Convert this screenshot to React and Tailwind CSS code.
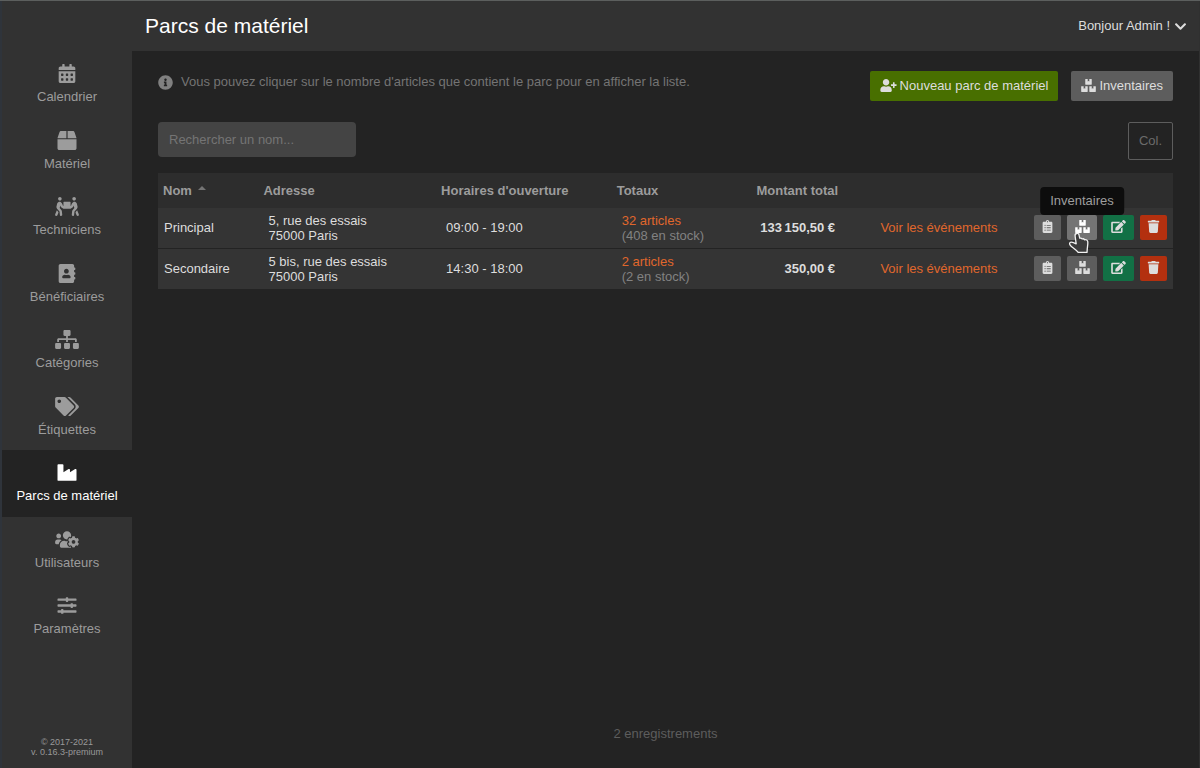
import { FaCalendarAlt, FaBox, FaPeopleCarry, FaAddressBook, FaSitemap, FaTags, FaIndustry, FaUsersCog, FaSlidersH, FaInfoCircle, FaUserPlus, FaBoxes, FaClipboardList, FaEdit, FaTrash, FaChevronDown } from "react-icons/fa";

const NAV = [
  { label: "Calendrier", Icon: FaCalendarAlt },
  { label: "Matériel", Icon: FaBox },
  { label: "Techniciens", Icon: FaPeopleCarry },
  { label: "Bénéficiaires", Icon: FaAddressBook },
  { label: "Catégories", Icon: FaSitemap },
  { label: "Étiquettes", Icon: FaTags },
  { label: "Parcs de matériel", Icon: FaIndustry, active: true },
  { label: "Utilisateurs", Icon: FaUsersCog },
  { label: "Paramètres", Icon: FaSlidersH },
];

const PARKS = [
  { name: "Principal", street: "5, rue des essais", town: "75000 Paris", hours: "09:00 - 19:00", articles: "32 articles", stock: "(408 en stock)", amount: "133\u202f150,50 €", hovered: true },
  { name: "Secondaire", street: "5 bis, rue des essais", town: "75000 Paris", hours: "14:30 - 18:00", articles: "2 articles", stock: "(2 en stock)", amount: "350,00 €" },
];

function Sidebar() {
  return (
    <aside className="flex w-[132px] shrink-0 flex-col justify-between border-l-2 border-[#2f343b] bg-[#323232] pt-[50px]">
      <nav>
        <ul className="grid h-[599px] auto-rows-fr">
          {NAV.map(({ label, Icon, active }) => (
            <li key={label}>
              <a
                href="#"
                aria-current={active ? "page" : undefined}
                className={
                  active
                    ? "flex h-full flex-col items-center gap-1 bg-[#232323] pt-[13px] text-white"
                    : "flex h-full flex-col items-center gap-1 pt-[13px] text-[#9c9c9c]"
                }
              >
                <Icon className="h-[19px] w-6" aria-hidden="true" />
                <span className="leading-5">{label}</span>
              </a>
            </li>
          ))}
        </ul>
      </nav>
      <p className="pb-[11px] text-center text-[9px] leading-[10px] text-[#999999]">
        © 2017-2021
        <br />
        v. 0.16.3-premium
      </p>
    </aside>
  );
}

function HandCursor() {
  return (
    <svg viewBox="0 0 22 24" className="pointer-events-none absolute top-[17px] left-0 z-20 h-6 w-[22px]" aria-hidden="true">
      <path
        d="M9.8 1.5C11 1.3 11.9 2 12.1 3.2L12.7 6.2C13.6 5.9 14.6 6.2 15.1 7C16 6.6 17 6.9 17.5 7.8C19.2 7.4 20.6 8.2 20.8 9.8C21 12 20.6 14.4 20.3 16.4L20 20.4H11.2C9.8 18 6.6 16.4 4.2 14.2C2.8 12.8 2 11.6 3 10.6C4.2 9.6 6 10.2 9.2 11.8L8.1 4C7.9 2.6 8.5 1.7 9.8 1.5Z"
        fill="#3b3b3b"
        stroke="#f2f2f2"
        strokeWidth="1.3"
        strokeLinejoin="round"
      />
    </svg>
  );
}

function RowActions({ name, hovered }) {
  return (
    <div className="flex items-center justify-end gap-[6px]">
      <button aria-label={`Liste du matériel de ${name}`} className="flex h-[25px] w-[27px] items-center justify-center rounded-xs bg-[#5d5d5d] pb-0.5 text-[#dddddd]">
        <FaClipboardList size={13} />
      </button>
      <div className="relative">
        <button
          aria-label={`Inventaires de ${name}`}
          className={
            hovered
              ? "flex h-[25px] w-[30px] items-center justify-center rounded-xs bg-[#747474] pb-0.5 text-white"
              : "flex h-[25px] w-[30px] items-center justify-center rounded-xs bg-[#5d5d5d] pb-0.5 text-[#dddddd]"
          }
        >
          <FaBoxes className="h-[13px] w-[15px]" />
        </button>
        {hovered && (
          <>
            <div role="tooltip" className="absolute bottom-full left-1/2 z-10 -translate-x-1/2 rounded bg-[#0d0d0d] px-2.5 py-1 leading-5 text-[#9e9e9e]">
              Inventaires
            </div>
            <HandCursor />
          </>
        )}
      </div>
      <button aria-label={`Modifier ${name}`} className="flex h-[25px] w-[31px] items-center justify-center rounded-xs bg-[#127045] pb-0.5 text-[#dddddd]">
        <FaEdit className="h-[13px] w-[15px]" />
      </button>
      <button aria-label={`Supprimer ${name}`} className="flex h-[25px] w-[27px] items-center justify-center rounded-xs bg-[#b3300f] pb-0.5 text-[#dddddd]">
        <FaTrash size={13} />
      </button>
    </div>
  );
}

export default function App() {
  return (
    <div className="flex min-h-screen border-t border-[#5c5f5e] bg-[#232323] font-['Liberation_Sans',Arial,sans-serif] text-[13px] text-[#dddddd]">
      <Sidebar />
      <div className="flex min-w-0 flex-1 flex-col border-r border-[#303030]">
        <header className="flex h-[50px] items-center justify-between bg-[#323232] pr-3 pl-[13px]">
          <h1 className="text-[21px] text-white">Parcs de matériel</h1>
          <button className="flex items-center gap-1">
            Bonjour Admin !
            <FaChevronDown size={13} aria-hidden="true" />
          </button>
        </header>

        <main className="flex flex-1 flex-col px-[26px] pt-5">
          <div className="flex items-start justify-between">
            <p className="flex items-center gap-2 pt-px leading-5 text-[#747474]">
              <FaInfoCircle size={15} className="text-[#808080]" aria-hidden="true" />
              Vous pouvez cliquer sur le nombre d'articles que contient le parc pour en afficher la liste.
            </p>
            <div className="flex gap-[13px]">
              <button className="flex h-[30px] items-center gap-[3px] rounded-xs bg-[#486f00] px-2.5">
                <FaUserPlus className="mb-0.5 h-[13px] w-[17px]" aria-hidden="true" />
                Nouveau parc de matériel
              </button>
              <button className="flex h-[30px] items-center gap-[3px] rounded-xs bg-[#5d5d5d] px-2.5">
                <FaBoxes className="mb-0.5 h-[13px] w-[15px]" aria-hidden="true" />
                Inventaires
              </button>
            </div>
          </div>

          <div className="mt-[21px] flex items-start justify-between">
            <input
              type="search"
              aria-label="Rechercher un nom"
              placeholder="Rechercher un nom..."
              className="h-[35px] w-[198px] rounded bg-[#444444] px-[11px] placeholder:text-[#747474]"
            />
            <button className="h-[38px] w-[45px] rounded-xs border border-[#5d5d5d] text-[#6b6b6b]">Col.</button>
          </div>

          <table className="mt-[13px] w-full table-fixed border-separate border-spacing-0 text-left">
            <colgroup>
              <col className="w-[9.9%]" />
              <col className="w-[17.5%]" />
              <col className="w-[17.3%]" />
              <col className="w-[11.7%]" />
              <col className="w-[11.1%]" />
              <col className="w-[17.5%]" />
              <col />
            </colgroup>
            <thead className="bg-[#2d2d2d] text-[#9c9c9c]">
              <tr className="h-[35px]">
                <th className="px-[5px]">
                  <span className="flex items-center gap-[6px]">
                    Nom
                    <svg viewBox="0 0 8 4" className="mb-[6px] h-1 w-2" aria-hidden="true">
                      <path d="M0 4L4 0L8 4Z" fill="#747474" />
                    </svg>
                  </span>
                </th>
                <th className="px-[5px]">Adresse</th>
                <th className="px-[5px]">Horaires d'ouverture</th>
                <th className="px-[5px]">Totaux</th>
                <th className="px-[5px] text-right">Montant total</th>
                <th />
                <th />
              </tr>
            </thead>
            <tbody className="bg-[#343434]">
              {PARKS.map((park) => (
                <tr key={park.name} className="h-[41px] leading-[15px] last:h-10 *:border-[#232323] not-last:*:border-b">
                  <td className="px-1.5 pb-0.5">{park.name}</td>
                  <td className="px-2.5">
                    {park.street}
                    <br />
                    {park.town}
                  </td>
                  <td className="px-2.5 pb-0.5">{park.hours}</td>
                  <td className="px-2.5 text-[#828282]">
                    <a href="#" className="text-[#e0672c]">{park.articles}</a>
                    <br />
                    {park.stock}
                  </td>
                  <td className="px-2 pb-0.5 text-right font-bold">{park.amount}</td>
                  <td className="pr-2.5 pb-0.5 pl-6 text-center">
                    <a href="#" className="text-[#e0672c]">Voir les événements</a>
                  </td>
                  <td className="pr-1.5 pb-0.5">
                    <RowActions name={park.name} hovered={park.hovered} />
                  </td>
                </tr>
              ))}
            </tbody>
          </table>

          <p className="mt-auto pb-6 text-center leading-5 text-[#5d5d5d]">2 enregistrements</p>
        </main>
      </div>
    </div>
  );
}
